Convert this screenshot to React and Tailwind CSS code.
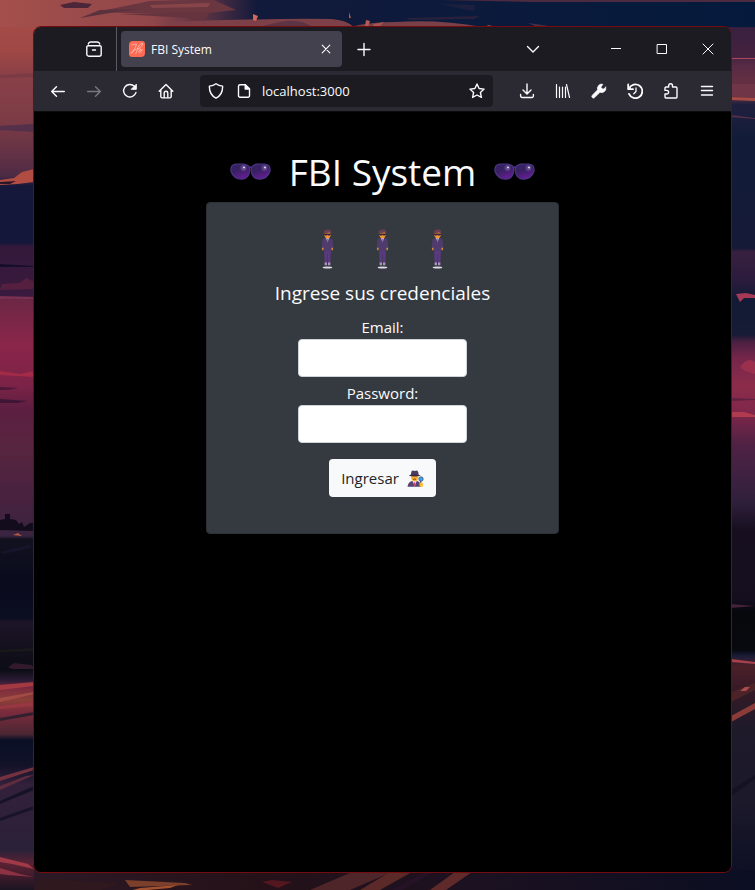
import React from "react";

/* ---------- wallpaper ---------- */

const leftSky = [
  [0, "#a84e4a"], [50, "#a04845"], [75, "#8a4047"], [120, "#7c3c46"], [160, "#5f3044"], [176, "#4c2b45"],
  [186, "#15183a"], [243, "#14163a"], [246, "#33183a"], [296, "#3a1a3e"], [300, "#6e2746"], [345, "#8a2649"],
  [385, "#7c2347"], [410, "#5c1f41"], [445, "#58253f"], [500, "#47223f"], [536, "#392440"], [539, "#12111f"],
  [580, "#090b1d"], [618, "#0b0d20"], [622, "#1d1428"], [670, "#0c0d14"], [681, "#2e1c36"], [688, "#7d2a40"],
  [700, "#8a4038"], [712, "#7a2b3c"], [734, "#4c2733"], [740, "#0a0f26"], [765, "#121229"], [785, "#33203a"],
  [850, "#2a2138"], [864, "#5c2234"], [890, "#1c1422"],
];

const rightSky = [
  [0, "#061a3c"], [25, "#071b3d"], [28, "#3a2040"], [55, "#42223f"], [66, "#582a45"], [96, "#6e333f"],
  [104, "#20203e"], [140, "#111c39"], [248, "#151a37"], [252, "#38203f"], [280, "#2b1b3c"], [300, "#121b35"],
  [335, "#171b36"], [342, "#4c2042"], [358, "#74264a"], [385, "#8c2c4a"], [412, "#80274a"], [445, "#4f2244"],
  [500, "#31203d"], [530, "#170f20"], [600, "#140e1f"], [612, "#06080c"], [650, "#07090e"], [656, "#1b1c38"],
  [666, "#4c2029"], [690, "#351a27"], [730, "#1e1a2a"], [800, "#1c192b"], [890, "#0a0d22"],
];

const strokes = [
  ["M60 5 L74 2 92 4 88 8 64 8Z", "#4b2638"],
  ["M96 12 L150 1 214 0 236 10 200 14 130 13Z", "#6a3640"],
  ["M80 18 L100 10 140 9 110 13Z", "#5a323e"],
  ["M120 14 L210 12 206 18 196 24 188 18Z", "#66343e"],
  ["M150 5 L210 3 208 7 152 8Z", "#884549"],
  ["M170 22 Q270 18 332 19 Q346 20 354 27 L170 27Z", "#7e4048"],
  ["M280 22 Q300 18 312 27 L258 27Z", "#5c3444"],
  ["M395 22 Q440 19 482 27 L350 27 Q370 22 395 22Z", "#7a4047"],
  ["M253 14 L258 16 256 21 253 20Z", "#d0685e"],
  ["M349 12 L351 18 349 18Z", "#b55a52"],
  ["M366 20 L370 21 368 27 365 26Z", "#b55a52"],
  ["M374 24 L384 22 378 28 372 28Z", "#a85450"],
  ["M440 4 L475 5 474 11 462 9Z", "#1c1f3e"],
  ["M484 29 L488 25 506 29Z", "#93504e"],
  ["M528 23 L570 29 560 30 540 28Z", "#4b3048"],
  ["M405 18 L480 16 474 19 410 20Z", "#27213e"],
  ["M440 0 L755 0 755 2 530 2Z", "#4c2a40"],
  ["M0 75 L34 73 34 77 0 78Z", "#7a3b45"],
  ["M0 126 L34 124 34 132 0 130Z", "#55304a"],
  ["M0 180 L14 178 22 172 34 169 34 182 18 184 0 185Z", "#b04c42"],
  ["M0 182 L16 181 10 184 0 184Z", "#2a1728"],
  ["M0 264 L34 266 34 267 0 267Z", "#160f2a"],
  ["M2 284 L20 283 26 278 34 282 34 289 0 290Z", "#552040"],
  ["M0 296 L34 297 34 299 0 299Z", "#7a3050"],
  ["M0 371 L20 374 34 371 34 377 18 376 0 375Z", "#a42b48"],
  ["M0 387 L18 388 8 390 0 390Z", "#4c1838"],
  ["M0 399 L28 401 18 403 0 403Z", "#401636"],
  ["M0 530 L0 520 5 519 5 514 10 514 10 519 16 520 19 524 22 522 24 527 30 523 34 523 34 531Z", "#120c1d"],
  ["M13 535 L18 533 22 536Z", "#b75945"],
  ["M0 552 L28 545 34 547 4 554Z", "#17152b"],
  ["M0 650 L34 648 34 651 0 652Z", "#171a19"],
  ["M8 667 L14 663 32 665 34 669 12 669Z", "#321a2b"],
  ["M0 685 L34 682 34 686 0 690Z", "#a33a42"],
  ["M0 698 L34 692 34 694 0 702Z", "#a34c46"],
  ["M0 706 L34 702 34 706 0 709Z", "#983642"],
  ["M0 718 L34 712 34 715 0 721Z", "#302030"],
  ["M0 777 L34 767 34 770 0 781Z", "#743240"],
  ["M0 786 L26 776 34 775 0 790Z", "#602d40"],
  ["M0 801 L34 786 34 790 0 804Z", "#151325"],
  ["M0 818 L34 806 34 809 0 821Z", "#181427"],
  ["M0 857 L28 864 34 869 12 864 0 862Z", "#a03a48"],
  ["M0 868 L20 874 34 877 8 875 0 874Z", "#8c3242"],
  ["M731 58 L755 58 755 59 731 59Z", "#a84859"],
  ["M731 84 L755 84 755 98 731 96Z", "#703546"],
  ["M731 97 L755 98 755 101 731 100Z", "#a64c44"],
  ["M731 115 L755 118 755 119 731 117Z", "#563048"],
  ["M736 294 L746 293 755 295 755 298 744 298 740 302Z", "#a63a56"],
  ["M740 367 Q748 356 755 362 L755 374 745 371Z", "#9a304e"],
  ["M731 412 L744 412 755 415 755 417 731 417Z", "#b03a4e"],
  ["M731 398 L755 399 755 400 731 401Z", "#5e2142"],
  ["M731 604 L755 606 731 608Z", "#442238"],
  ["M731 659 L755 662 755 664 731 662Z", "#a8404a"],
  ["M731 692 L755 683 755 690 731 702Z", "#4c2427"],
  ["M731 716 L755 703 755 709 731 722Z", "#8c3c38"],
  ["M740 691 L745 687 750 687 746 691Z", "#ad4c50"],
  ["M731 790 L755 775 755 779 731 796Z", "#151323"],
  ["M40 878 L120 884 100 890 34 890Z", "#30181f"],
  ["M125 880 L185 883 192 885 130 887Z", "#7c3f2c"],
  ["M125 892 L140 888 178 885 170 888Z", "#a3522f"],
  ["M262 882 L272 880 292 882 278 888Z", "#54171f"],
  ["M310 890 L352 872 392 872 350 890Z", "#4e2528"],
  ["M360 890 L390 872 412 872 380 890Z", "#5b2928"],
  ["M430 890 L455 872 472 872 446 890Z", "#602a2b"],
  ["M392 890 L425 872 434 872 402 890Z", "#251226"],
];

function Ramp({ id, stops }) {
  return (
    <linearGradient id={id} gradientUnits="userSpaceOnUse" x1="0" y1="0" x2="0" y2="890">
      {stops.map(([y, c]) => (
        <stop key={y} offset={y / 890} stopColor={c} />
      ))}
    </linearGradient>
  );
}

function Wallpaper() {
  return (
    <svg className="absolute inset-0 h-full w-full" viewBox="0 0 755 890" preserveAspectRatio="none" aria-hidden="true">
      <defs>
        <Ramp id="skyLeft" stops={leftSky} />
        <Ramp id="skyRight" stops={rightSky} />
        <linearGradient id="skyTop" x1="0" x2="1" y1="0" y2="0">
          <stop offset="0" stopColor="#a44f4b" />
          <stop offset=".2" stopColor="#91474a" />
          <stop offset=".27" stopColor="#5c3345" />
          <stop offset=".34" stopColor="#121a3b" />
          <stop offset="1" stopColor="#041a3c" />
        </linearGradient>
        <linearGradient id="ground" x1="0" x2="1" y1="0" y2="0">
          <stop offset="0" stopColor="#2b1926" />
          <stop offset=".3" stopColor="#251118" />
          <stop offset=".6" stopColor="#1c1120" />
          <stop offset="1" stopColor="#0b0e22" />
        </linearGradient>
      </defs>
      <rect width="400" height="890" fill="url(#skyLeft)" />
      <rect x="400" width="355" height="890" fill="url(#skyRight)" />
      <rect width="755" height="27" fill="url(#skyTop)" />
      <rect x="34" y="870" width="721" height="20" fill="url(#ground)" />
      {strokes.map(([d, c]) => (
        <path key={d} d={d} fill={c} />
      ))}
    </svg>
  );
}

/* ---------- icons ---------- */

function Icon({ children, size = 16, width = 1.4 }) {
  return (
    <svg
      width={size}
      height={size}
      viewBox={`0 0 ${size} ${size}`}
      fill="none"
      stroke="currentColor"
      strokeWidth={width}
      strokeLinecap="round"
      strokeLinejoin="round"
      className="shrink-0"
      aria-hidden="true"
    >
      {children}
    </svg>
  );
}

const icons = {
  archive: (
    <Icon>
      <path d="M2.300 3Q2.700 1 4.500 1h7Q13.300 1 13.700 3M2 4.800h12a1.200 1.200 0 0 1 1.200 1.200v7.200a2 2 0 0 1-2 2H2.800a2 2 0 0 1-2-2V6A1.200 1.200 0 0 1 2 4.800ZM6.500 9h3" />
    </Icon>
  ),
  back: <Icon><path d="M14.300 8.500H1.700M6.500 3.700 1.700 8.500l4.800 4.800" /></Icon>,
  forward: <Icon><path d="M1.700 8.500h12.600M9.500 3.700l4.800 4.800-4.800 4.800" /></Icon>,
  reload: (
    <Icon>
      <path d="M14 9.400A6.300 6.300 0 1 1 12.400 3.300" />
      <path d="M14.300 1.600v4.700H9.600Z" fill="currentColor" strokeWidth="1" />
    </Icon>
  ),
  home: (
    <Icon>
      <path d="M1.200 8.300 8 1.600l6.800 6.700M2.800 7v6.600a1.300 1.300 0 0 0 1.300 1.300h7.800a1.300 1.300 0 0 0 1.300-1.300V7M6.200 14.700V10a1.800 1.800 0 0 1 3.600 0v4.700" />
    </Icon>
  ),
  shield: <Icon><path d="M8 .8c2 1.500 4.200 2.100 6.600 2.300.2 5-1.700 9.500-6.600 12.100C3.100 12.600 1.200 8.100 1.400 3.100 3.800 2.900 6 2.300 8 .8Z" /></Icon>,
  page: (
    <Icon>
      <path d="M9.300 1.700H4a1.500 1.500 0 0 0-1.500 1.500v9.600A1.500 1.500 0 0 0 4 14.300h8a1.500 1.500 0 0 0 1.500-1.500V6Z" />
      <path d="M9.200 1.700V6h4.300Z" fill="currentColor" />
    </Icon>
  ),
  star: <Icon><path d="m8 1 2.100 4.500 5 .6-3.700 3.400 1 4.900L8 12l-4.400 2.400 1-4.900L.9 6.100l5-.6Z" /></Icon>,
  download: <Icon><path d="M8 .9v9.800M4 7l4 4 4-4M1.600 11.500V13a1.500 1.500 0 0 0 1.500 1.500h9.800a1.500 1.500 0 0 0 1.500-1.500v-1.500" /></Icon>,
  library: <Icon width={1.2}><path d="M1.500 1.500v13M4.500 4v10.500M7.500 4v10.500M10.500 4v10.500M11.500 1.500l3 13" /></Icon>,
  wrench: (
    <Icon width={0.6}>
      <path
        fill="currentColor"
        d="M14.800 4.200 12 6.300 9.900 4.200l2-2.900a4.300 4.300 0 0 0-5.300 5.500L1.300 12.200a1.600 1.600 0 0 0 2.300 2.400L9 9.300a4.300 4.300 0 0 0 5.800-5.100Z"
      />
    </Icon>
  ),
  history: (
    <Icon width={1.8}>
      <path d="M1.200 1.500v4.700H6M2 5.700A6.900 6.900 0 1 1 2 10.900" />
      <path d="M9 4.800v3.700L6.800 10.700" strokeWidth="1.300" />
    </Icon>
  ),
  puzzle: (
    <Icon>
      <path d="M5.700 4V2.700a1.900 1.900 0 0 1 3.800 0V4h3.300a1.200 1.200 0 0 1 1.200 1.200v8.600a1.200 1.200 0 0 1-1.200 1.200H3.200A1.200 1.200 0 0 1 2 13.800V11h1.800a1.800 1.800 0 0 0 0-3.600H2V5.200A1.200 1.200 0 0 1 3.200 4Z" />
    </Icon>
  ),
  menu: <Icon><path d="M2.500 3.500h11M2.500 7.500h11M2.500 12h11" /></Icon>,
  plus: <Icon><path d="M8 2.500v12M2 8.500h12" /></Icon>,
  chevron: <Icon><path d="M2.500 5.500 8 11l5.500-5.500" /></Icon>,
  closeTab: <Icon width={1.1}><path d="m4.200 4.200 7.600 7.600m0-7.600-7.600 7.600" /></Icon>,
  minimize: <Icon width={1}><path d="M3 7.500h10" strokeLinecap="butt" /></Icon>,
  maximize: <Icon width={1}><path d="M3.500 3.500h9v9h-9Z" strokeLinejoin="miter" /></Icon>,
  close: <Icon width={1}><path d="m3 3 10 10M13 3 3 13" /></Icon>,
};

function IconButton({ label, icon, className = "" }) {
  return (
    <button type="button" aria-label={label} className={`flex h-8 w-8 shrink-0 items-center justify-center rounded ${className}`}>
      {icons[icon]}
    </button>
  );
}

function WindowButton({ label, icon }) {
  return (
    <button type="button" aria-label={label} className="flex h-11 w-[46px] shrink-0 items-center justify-center">
      {icons[icon]}
    </button>
  );
}

function Favicon() {
  return (
    <svg width="16" height="16" viewBox="0 0 16 16" className="shrink-0" aria-hidden="true">
      <path d="M4 0h9a3 3 0 0 1 3 3v9a4 4 0 0 1-4 4H3a3 3 0 0 1-3-3V4a4 4 0 0 1 4-4Z" fill="#ff6a55" />
      <path
        d="M2.500 4.200Q5 2.600 7.500 3.200 7 6 4.500 9.500T2 12.600Q2 10.500 7 8.200M13.500 2.500Q9.500 3.200 8.200 8.500T6.500 12.500M13.500 2.500Q14 5.500 8.500 8Q12.500 7 12 10.500Q10 13 9.500 10.500Q11 8.500 13.500 8.800"
        fill="none"
        stroke="#ffc4b8"
        strokeWidth=".8"
        strokeLinecap="round"
      />
    </svg>
  );
}

/* ---------- emoji ---------- */

function Sunglasses() {
  return (
    <svg width="41" height="18" viewBox="0 0 41 18" className="shrink-0" role="img" aria-label="Lentes de sol">
      <defs>
        <linearGradient id="lens" x1="0" y1="0" x2=".4" y2="1">
          <stop offset="0" stopColor="#33245f" />
          <stop offset=".5" stopColor="#3a2065" />
          <stop offset="1" stopColor="#641d90" />
        </linearGradient>
      </defs>
      <path d="M18 5.500Q20.500 3 23 5.500" fill="none" stroke="#48358a" strokeWidth="2" />
      <path d="M6 1.200H14Q19.800 1.800 19.800 7.500 18.800 16.200 11.500 16.200 4 16.200 1 8.500 .2 1.500 6 1.200Z" fill="url(#lens)" stroke="#4a3585" strokeWidth="1.200" />
      <path d="M35 1.200H27Q21.200 1.800 21.200 7.500 22.200 16.200 29.500 16.200 37 16.200 40 8.500 40.800 1.500 35 1.200Z" fill="url(#lens)" stroke="#4a3585" strokeWidth="1.200" />
      <circle cx="13.500" cy="5" r="3" fill="#8d7bb4" opacity=".4" />
      <circle cx="14" cy="4.500" r="1.100" fill="#d9d0ea" />
      <circle cx="34.500" cy="5" r="3" fill="#8d7bb4" opacity=".4" />
      <circle cx="35" cy="4.500" r="1.100" fill="#d9d0ea" />
    </svg>
  );
}

function Agent() {
  return (
    <svg width="13" height="40" viewBox="0 0 13 40" className="shrink-0" role="img" aria-label="Agente">
      <ellipse cx="6.500" cy="38.500" rx="4.800" ry="1" fill="#e0d9e6" />
      <path d="M3 18h7l-.6 17H6.900l-.4-13-.4 13H3.600Z" fill="#5a3a7e" />
      <path d="M3.600 33.500h2.400v2.800H3.700ZM7 33.500h2.400l-.1 2.800H7Z" fill="#a995bd" />
      <path d="M4 9h5l2.600 1.500.8 9-2.100.5-.2 2H2.900l-.2-2L.6 19.500l.8-9Z" fill="#4f3c6c" />
      <path d="m5 8.500 1.500 5 1.600-5Z" fill="#d6cfe2" />
      <path d="M6.500 9.500v4" stroke="#6a4a94" strokeWidth=".7" />
      <path d="M.8 18.800h1.800v2.400H1.200ZM10.400 18.800h1.800l-.3 2.400h-1.500Z" fill="#c98a3a" />
      <path d="M3.300 3h6.500v3.500Q9 9.300 6.500 9.300T3.300 6.500Z" fill="#f3962d" />
      <path d="M3 4.400h7v1.600L8 6.800 6.500 6 5 6.800 3 6Z" fill="#3c2440" />
      <path d="M2.800 4.400Q2 1 5 1q3-1.500 4.700.5 1 1 .3 2.900L8.500 3.600Z" fill="#68404f" />
    </svg>
  );
}

function Detective() {
  return (
    <svg width="17" height="17" viewBox="0 0 17 17" className="shrink-0" aria-hidden="true">
      <path d="M3.800 6Q4 11 7.500 11.500T11.500 6Z" fill="#f9b02e" />
      <path d="M.5 16.800Q1 12 5 11l2.500 1.500L10.200 11Q14 12 14 16.800Z" fill="#544374" />
      <path d="m5.800 11.300 1.900 5.500 1.800-5.500Z" fill="#e3d8ea" />
      <path d="m7.600 11.800-.8 2 .8 3 .9-3Z" fill="#c83f62" />
      <path d="M4 5Q4 .5 6 .6l1.700.5L9.500.5Q11.500.5 11.700 5Z" fill="#4d3d60" />
      <path d="M2 5.700Q2.300 4.300 7.700 4.400T13.500 5.700Q11 6.500 7.700 6.500T2 5.700Z" fill="#392b4d" />
      <path d="M6 9.400q1.500-.8 3 0" stroke="#7b432d" fill="none" />
      <path d="M13.700 11v4" stroke="#60406a" strokeWidth="1.300" />
      <circle cx="14" cy="9" r="2.200" fill="#3ba3e5" stroke="#405585" strokeWidth=".8" />
      <path d="M12.300 13.500q1.800-2 3.700 0l-.2 3.300h-3Z" fill="#fabd37" />
    </svg>
  );
}

/* ---------- browser chrome ---------- */

function TabStrip() {
  return (
    <div className="flex h-11 items-center bg-[#1c1b22] pl-11">
      <IconButton label="Recent browsing" icon="archive" />
      <div className="ml-1.5 h-full w-px bg-[#5b5a62]" />
      <div className="ml-1 flex h-9 w-[221px] items-center gap-1.5 rounded bg-[#42414d] px-2">
        <Favicon />
        <span className="flex-1 pt-0.5 text-xs">FBI System</span>
        <button type="button" aria-label="Close tab">{icons.closeTab}</button>
      </div>
      <IconButton label="New tab" icon="plus" className="ml-1.5" />
      <IconButton label="List all tabs" icon="chevron" className="mr-11 ml-auto" />
      <WindowButton label="Minimize" icon="minimize" />
      <WindowButton label="Maximize" icon="maximize" />
      <WindowButton label="Close window" icon="close" />
    </div>
  );
}

function NavBar() {
  return (
    <div className="flex h-10 items-center gap-1 bg-[#2b2a33] px-2">
      <IconButton label="Back" icon="back" />
      <IconButton label="Forward" icon="forward" className="text-[#78777e]" />
      <IconButton label="Reload" icon="reload" />
      <IconButton label="Home" icon="home" />
      <div className="mx-3.5 flex h-8 min-w-0 flex-1 items-center rounded bg-[#1c1b22] px-2">
        {icons.shield}
        <span className="ml-3 flex">{icons.page}</span>
        <input
          type="text"
          aria-label="Address"
          defaultValue="localhost:3000"
          className="ml-2.5 min-w-0 flex-1 bg-transparent pt-0.5 text-[13px] outline-none"
        />
        <button type="button" aria-label="Bookmark this page">{icons.star}</button>
      </div>
      <IconButton label="Downloads" icon="download" />
      <IconButton label="Library" icon="library" />
      <IconButton label="Developer tools" icon="wrench" />
      <IconButton label="History" icon="history" />
      <IconButton label="Extensions" icon="puzzle" />
      <IconButton label="Menu" icon="menu" />
    </div>
  );
}

/* ---------- page ---------- */

function Field({ id, label, type }) {
  return (
    <div className="flex flex-col items-center">
      <label htmlFor={id} className="text-[15px] leading-6">{label}</label>
      <input id={id} type={type} className="h-[38px] w-[169px] rounded border border-[#ced4da] bg-white px-3 text-[15px] text-[#212529]" />
    </div>
  );
}

function LoginPage() {
  return (
    <main className="flex flex-1 flex-col items-center border-t border-[#0c0c0d] bg-black pt-9">
      <h1 className="flex items-center gap-[18px] text-[37px] leading-[48px]">
        <Sunglasses />
        FBI System
        <Sunglasses />
      </h1>
      <section className="mt-1.5 w-[353px] max-w-full rounded border border-[#2c3035] bg-[#343a40] pt-[26px] pb-9">
        <div className="flex justify-center gap-[42px]">
          <Agent />
          <Agent />
          <Agent />
        </div>
        <h2 className="mt-3 text-center text-[19px] leading-6">Ingrese sus credenciales</h2>
        <form className="mt-2.5 flex flex-col items-center gap-1" onSubmit={(e) => e.preventDefault()}>
          <Field id="email" label="Email:" type="email" />
          <Field id="password" label="Password:" type="password" />
          <button type="submit" className="mt-3 flex h-[38px] items-center gap-2 rounded bg-[#f8f9fa] px-3 text-[15px] text-[#212529]">
            Ingresar
            <Detective />
          </button>
        </form>
      </section>
    </main>
  );
}

export default function App() {
  return (
    <div className="relative flex min-h-screen flex-col bg-[#120e1c] pt-[26px] pr-[23px] pb-[17px] pl-[33px] font-['Open_Sans','Noto_Sans',sans-serif] text-[#fbfbfe]">
      <Wallpaper />
      <div className="relative flex flex-1 flex-col overflow-hidden rounded-lg border border-[#730b10]">
        <TabStrip />
        <NavBar />
        <LoginPage />
      </div>
    </div>
  );
}
